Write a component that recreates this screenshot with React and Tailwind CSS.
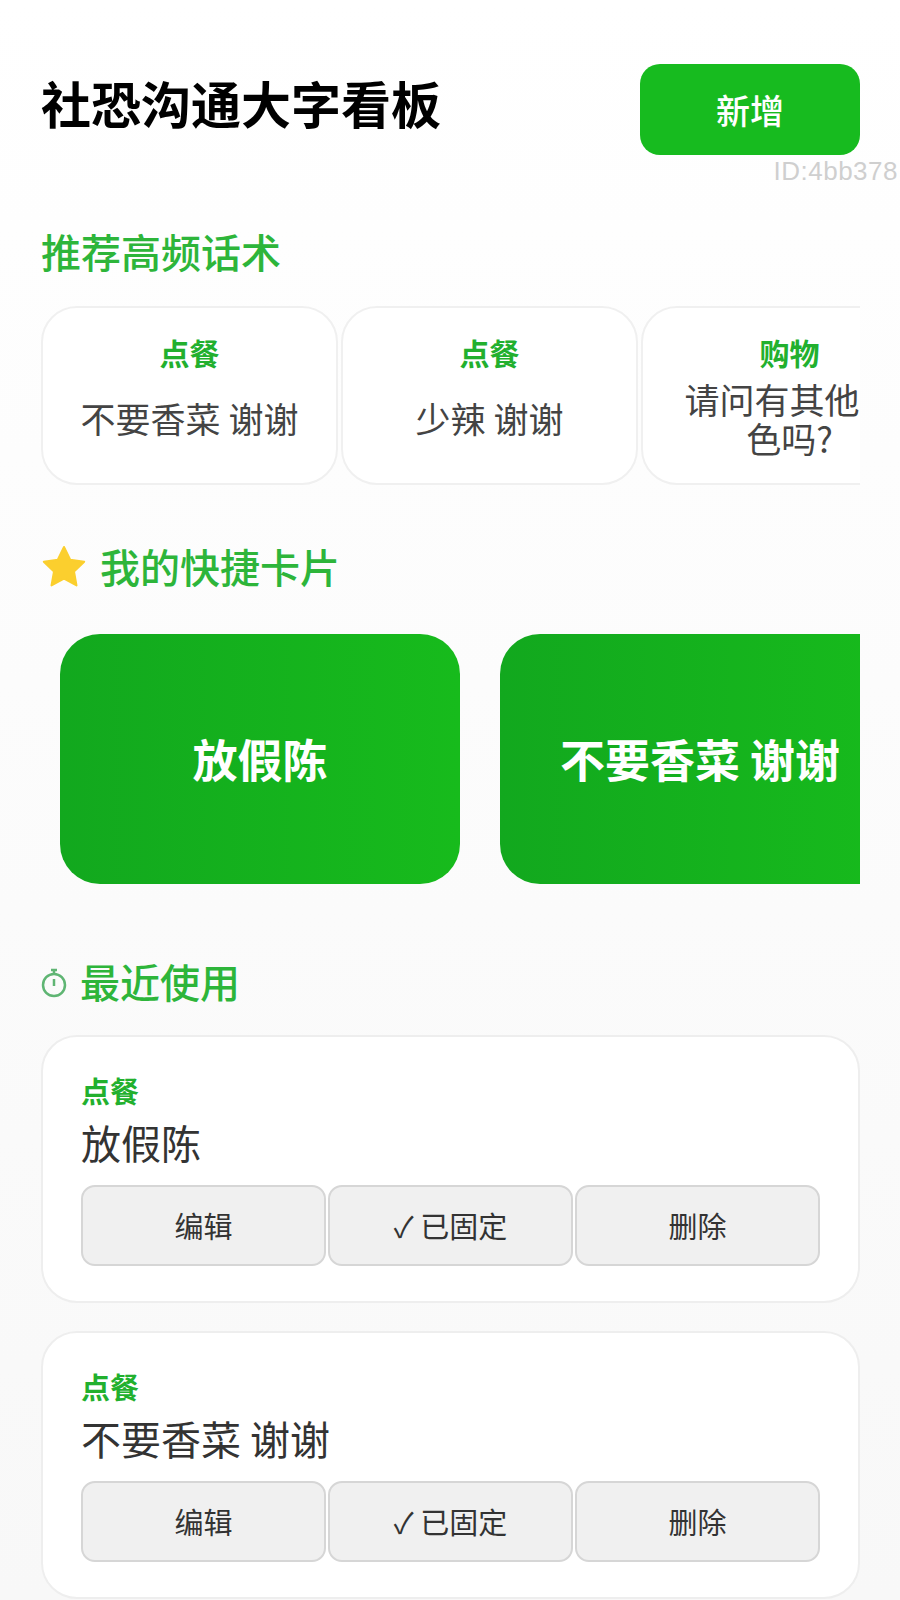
const cjk = "font-['Noto_Sans_CJK_SC','Noto_Sans',sans-serif]";

const suggestions = [
  { tag: "点餐", text: "不要香菜 谢谢" },
  { tag: "点餐", text: "少辣 谢谢" },
  { tag: "购物", text: "请问有其他颜色吗?" },
];

const recent = [
  { tag: "点餐", text: "放假陈" },
  { tag: "点餐", text: "不要香菜 谢谢" },
];

const StarIcon = () => (
  <svg width="46" height="44" viewBox="0 0 46 44">
    <path
      d="M23 3l6.200 12.800 14 1.900-10.200 9.800 2.500 13.900L23 34.700l-12.500 6.700 2.500-13.900L2.800 17.700l14-1.900z"
      fill="#fbcf2e"
      stroke="#fbcf2e"
      strokeWidth="2"
      strokeLinejoin="round"
    />
  </svg>
);

const ClockIcon = () => (
  <svg width="26" height="30" viewBox="0 0 26 30" fill="none" stroke="#5fb573" strokeWidth="2.500" className="mt-[3px]">
    <circle cx="13" cy="17" r="11" />
    <path d="M13 1v5M10 2h6M13 11v7" />
  </svg>
);

const ActionButton = ({ children }) => (
  <button className="flex-1 h-[81px] flex items-center justify-center rounded-[14px] bg-[#f0f0f0] border-2 border-[#d6d6d6] text-[29px] text-[#333]">
    {children}
  </button>
);

const RecentCard = ({ tag, text }) => (
  <div className="h-[268px] rounded-[36px] bg-white border-2 border-[#eeeeee] pl-[38px] pr-[38px] pt-[36px]">
    <div className="text-[29px] leading-[34px] font-bold text-[#22b02e]">{tag}</div>
    <div className="mt-[10px] text-[40px] leading-[50px] text-[#333]">{text}</div>
    <div className="mt-[18px] flex gap-[2px]">
      <ActionButton>编辑</ActionButton>
      <ActionButton>✓ 已固定</ActionButton>
      <ActionButton>删除</ActionButton>
    </div>
  </div>
);

export default function App() {
  return (
    <div className={`w-[900px] h-[1600px] overflow-hidden bg-gradient-to-b from-white to-[#f8f8f8] pl-[41px] pr-[40px] pt-[64px] ${cjk}`}>
      {/* Header */}
      <div className="flex justify-between">
        <h1 className="mt-[6px] text-[50px] leading-[64px] font-bold text-black">社恐沟通大字看板</h1>
        <button className="w-[220px] h-[91px] rounded-[20px] bg-[#17bb1f] text-white text-[34px] font-medium">新增</button>
      </div>
      <div className="mt-[4px] -mr-[38px] text-right text-[26px] leading-[24px] tracking-[0.5px] text-[#cfcfcf] font-['Liberation_Sans',sans-serif]">ID:4bb378</div>

      {/* Suggestions */}
      <h2 className="mt-[43px] text-[40px] leading-[50px] font-medium text-[#2db53a]">推荐高频话术</h2>
      <div className="mt-[30px] flex gap-[3px] overflow-hidden">
        {suggestions.map((s, i) => (
          <div key={i} className="w-[297px] h-[179px] shrink-0 rounded-[36px] bg-white border-2 border-[#f0f0f0] flex flex-col items-center pt-[26px] px-[30px]">
            <div className="text-[30px] leading-[36px] font-bold text-[#22b02e]">{s.tag}</div>
            <div className="flex-1 flex items-center text-center text-[#444] text-[35px] leading-[39px] pb-[18px]">{s.text}</div>
          </div>
        ))}
      </div>

      {/* Quick cards */}
      <div className="mt-[56px] flex items-center gap-[13px]">
        <StarIcon />
        <h2 className="text-[40px] leading-[50px] font-medium text-[#2db53a]">我的快捷卡片</h2>
      </div>
      <div className="mt-[43px] pl-[19px] flex gap-[40px] overflow-hidden">
        <div className="w-[400px] h-[250px] shrink-0 rounded-[40px] bg-gradient-to-r from-[#12a81e] to-[#17bb1c] flex items-center justify-center text-white text-[45px] font-bold">放假陈</div>
        <div className="w-[400px] h-[250px] shrink-0 rounded-[40px] bg-gradient-to-r from-[#12a81e] to-[#17bb1c] flex items-center justify-center text-white text-[45px] font-bold">不要香菜 谢谢</div>
      </div>

      {/* Recent */}
      <div className="mt-[72px] flex items-center gap-[13px]">
        <ClockIcon />
        <h2 className="text-[40px] leading-[50px] font-medium text-[#2db53a]">最近使用</h2>
      </div>
      <div className="mt-[29px] flex flex-col gap-[28px]">
        {recent.map((r, i) => (
          <RecentCard key={i} {...r} />
        ))}
      </div>
    </div>
  );
}
